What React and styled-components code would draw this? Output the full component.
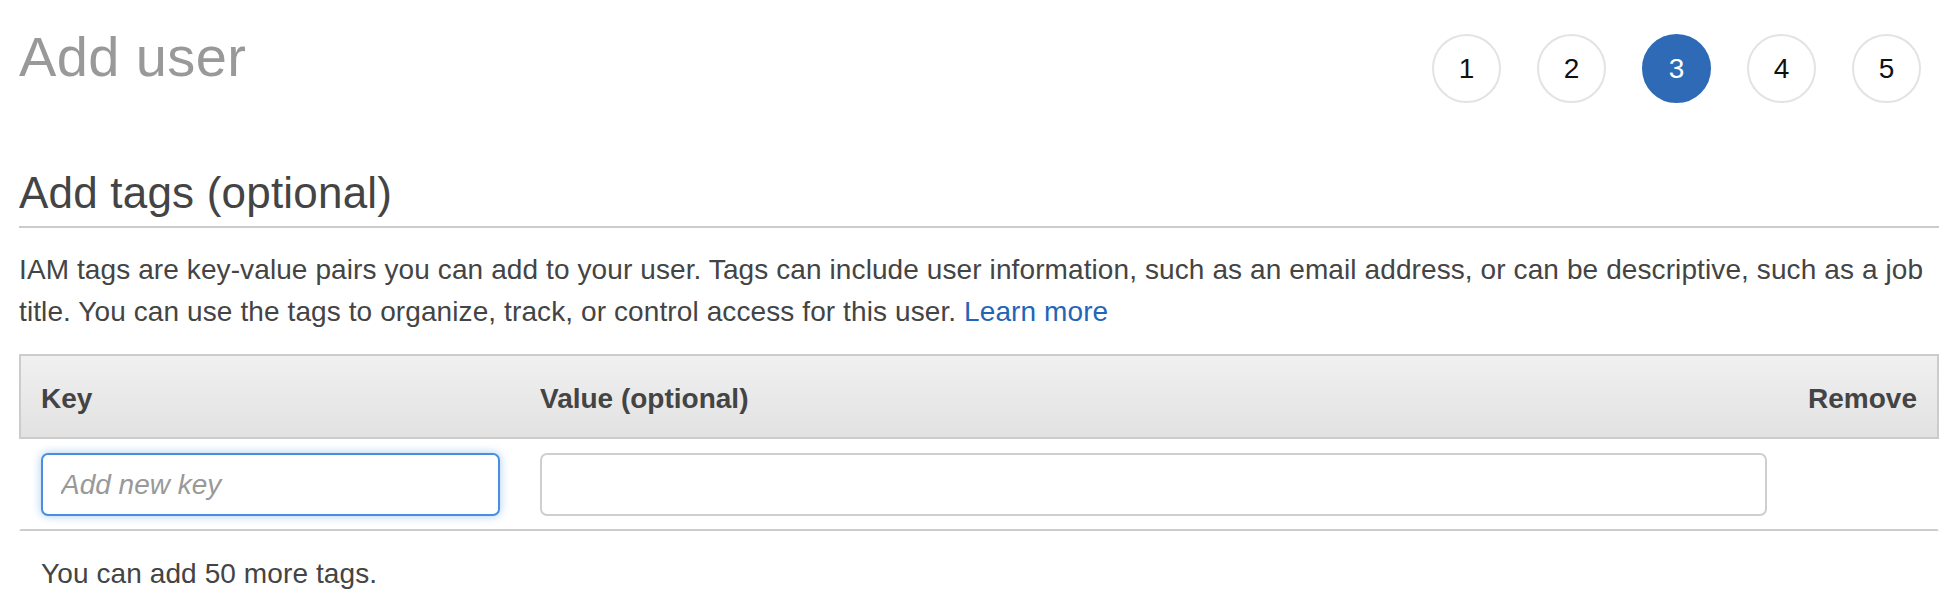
import React from 'react';
import styled, { createGlobalStyle } from 'styled-components';

const GlobalStyle = createGlobalStyle`
  html, body {
    margin: 0;
    padding: 0;
    background: #fff;
  }
  body {
    font-family: 'Liberation Sans', Arial, sans-serif;
    color: #444;
  }
`;

const Page = styled.div`
  box-sizing: border-box;
  width: 1960px;
  padding: 0 21px 0 19px;
`;

const Top = styled.div`
  display: flex;
  justify-content: space-between;
  align-items: flex-start;
  padding-top: 29px;
`;

const Title = styled.h1`
  margin: 0;
  font-size: 56px;
  line-height: 56px;
  font-weight: 400;
  letter-spacing: 0.4px;
  color: #999;
`;

const Steps = styled.ol`
  display: flex;
  gap: 36px;
  list-style: none;
  margin: 5px 18px 0 0;
  padding: 0;
`;

const Step = styled.li`
  box-sizing: border-box;
  width: 69px;
  height: 69px;
  border-radius: 50%;
  display: flex;
  align-items: center;
  justify-content: center;
  font-size: 28px;
  border: 2px solid ${(p) => (p.active ? '#2e6ab5' : '#e3e3e3')};
  background: ${(p) => (p.active ? '#2e6ab5' : '#fff')};
  color: ${(p) => (p.active ? '#fff' : '#111')};
`;

const Heading = styled.h2`
  margin: 66px 0 0;
  padding-bottom: 9px;
  font-size: 44px;
  line-height: 1.1;
  font-weight: 400;
  letter-spacing: 0.2px;
  color: #444;
  border-bottom: 2px solid #ccc;
`;

const Intro = styled.p`
  margin: 21px 0 0;
  font-size: 28px;
  line-height: 42px;
  letter-spacing: 0.1px;
  color: #444;
  a {
    color: #1f66b8;
    text-decoration: none;
  }
`;

const Tags = styled.div`
  margin-top: 21px;
`;

const HeadRow = styled.div`
  box-sizing: border-box;
  display: grid;
  grid-template-columns: 499px 1fr 150px;
  align-items: center;
  height: 85px;
  border: 2px solid #ccc;
  background: linear-gradient(#f0f0f0, #e2e2e2);
`;

const HeadCell = styled.div`
  padding: 4px 20px 0;
  font-size: 28px;
  font-weight: 700;
  color: #444;
  text-align: ${(p) => p.align || 'left'};
`;

const Row = styled.div`
  display: grid;
  grid-template-columns: 499px 1fr 150px;
  align-items: center;
  padding: 14px 0 13px;
  border-left: 2px solid transparent;
  border-right: 2px solid transparent;
  border-bottom: 2px solid #ccc;
`;

const Cell = styled.div`
  padding: 0 20px;
`;

const Field = styled.input`
  box-sizing: border-box;
  display: block;
  width: 100%;
  height: 63px;
  padding: 0 18px;
  border-radius: 7px;
  font-family: 'Liberation Sans', Arial, sans-serif;
  font-size: 28px;
  color: #444;
  outline: none;
  border: 2px solid ${(p) => (p.focused ? '#4a8ee0' : '#cfcfcf')};
  box-shadow: ${(p) =>
    p.focused ? '0 0 10px rgba(74, 142, 224, 0.45)' : 'none'};
  &::placeholder {
    color: #999;
    font-style: italic;
  }
`;

const Note = styled.p`
  margin: 22px 0 0;
  padding-left: 22px;
  font-size: 28px;
  line-height: 42px;
  letter-spacing: 0.1px;
  color: #444;
`;

const steps = [1, 2, 3, 4, 5];

const App = () => (
  <>
    <GlobalStyle />
    <Page>
      <Top>
        <Title>Add user</Title>
        <Steps>
          {steps.map((n) => (
            <Step key={n} active={n === 3}>
              {n}
            </Step>
          ))}
        </Steps>
      </Top>
      <Heading>Add tags (optional)</Heading>
      <Intro>
        IAM tags are key-value pairs you can add to your user. Tags can include
        user information, such as an email address, or can be descriptive, such
        as a job title. You can use the tags to organize, track, or control
        access for this user. <a href="#learn">Learn more</a>
      </Intro>
      <Tags>
        <HeadRow>
          <HeadCell>Key</HeadCell>
          <HeadCell>Value (optional)</HeadCell>
          <HeadCell align="right">Remove</HeadCell>
        </HeadRow>
        <Row>
          <Cell>
            <Field focused placeholder="Add new key" />
          </Cell>
          <Cell>
            <Field />
          </Cell>
          <Cell />
        </Row>
      </Tags>
      <Note>You can add 50 more tags.</Note>
    </Page>
  </>
);

export default App;
